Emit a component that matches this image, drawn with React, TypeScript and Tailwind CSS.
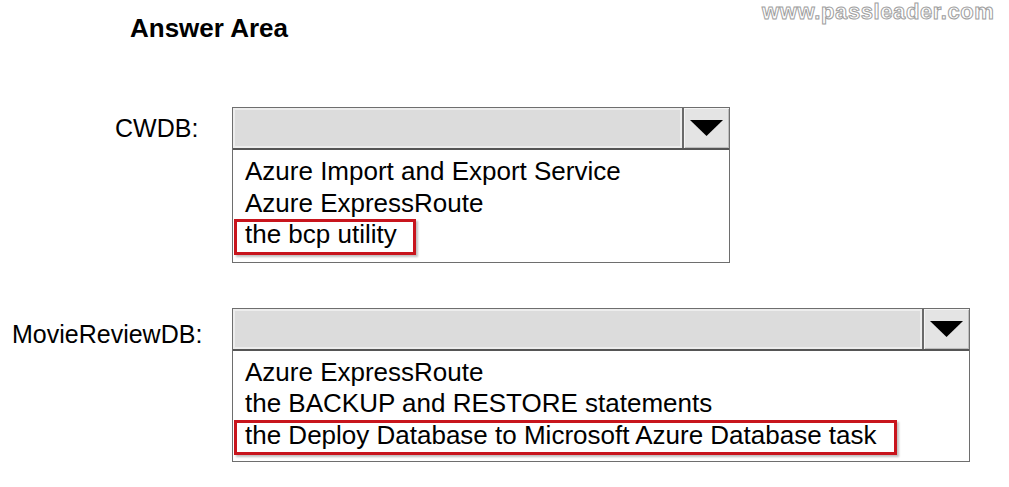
import React from "react";

type DropdownProps = {
  width: string;
  options: string[];
  selected: number;
  boxRight: string;
  pb: string;
};

function Dropdown({ width, options, selected, boxRight, pb }: DropdownProps) {
  return (
    <div className={`${width} border border-[#6e6e6e] bg-white`}>
      <div className="flex h-[42px] border-b-2 border-[#555555]">
        <div className="flex-1 bg-[#dcdcdc] border-[2px] border-[#ededed]" />
        <div className="w-[47px] flex items-center justify-center bg-[#e4e4e4] border-l-2 border-[#6a6a6a] shadow-[inset_1px_1px_0_#f4f4f4,inset_-1px_-1px_0_#bdbdbd]">
          <svg width="33" height="16" viewBox="0 0 33 16">
            <polygon points="0,0 33,0 16.5,16" fill="#000" />
          </svg>
        </div>
      </div>
      <div className={`pt-[6px] ${pb} pl-[12px] text-[26px] leading-[31.5px]`}>
        {options.map((o, i) =>
          i === selected ? (
            <div key={i}>
              <span className="relative inline-block">
                {o}
                <span
                  className={`absolute left-[-11px] ${boxRight} top-[0px] bottom-[-4px] border-[3px] border-[#c8151d] shadow-[2px_2px_2px_rgba(0,0,0,0.25)]`}
                />
              </span>
            </div>
          ) : (
            <div key={i}>{o}</div>
          )
        )}
      </div>
    </div>
  );
}

export default function App() {
  return (
    <div className="relative w-[1009px] h-[487px] overflow-hidden bg-white text-black font-['Liberation_Sans',Arial,sans-serif]">
      <div className="absolute left-[762px] top-[-2px] text-[22px] leading-[28px] font-bold tracking-[0.6px] text-transparent [-webkit-text-stroke:1px_#a0a0a0]">
        www.passleader.com
      </div>

      <div className="pt-[12px] pl-[130px] text-[26px] leading-[32px] font-bold">
        Answer Area
      </div>

      <div className="mt-[63px] flex">
        <div className="w-[232px] pl-[115px] pt-[6px] text-[25px] leading-[30px]">CWDB:</div>
        <Dropdown
          width="w-[498px]"
          options={["Azure Import and Export Service", "Azure ExpressRoute", "the bcp utility"]}
          selected={2}
          boxRight="right-[-19px]"
          pb="pb-[11px]"
        />
      </div>

      <div className="mt-[45px] flex">
        <div className="w-[232px] pl-[12px] pt-[11px] text-[25px] leading-[30px]">MovieReviewDB:</div>
        <Dropdown
          width="w-[738px]"
          options={[
            "Azure ExpressRoute",
            "the BACKUP and RESTORE statements",
            "the Deploy Database to Microsoft Azure Database task",
          ]}
          selected={2}
          boxRight="right-[-20px]"
          pb="pb-[10px]"
        />
      </div>
    </div>
  );
}
